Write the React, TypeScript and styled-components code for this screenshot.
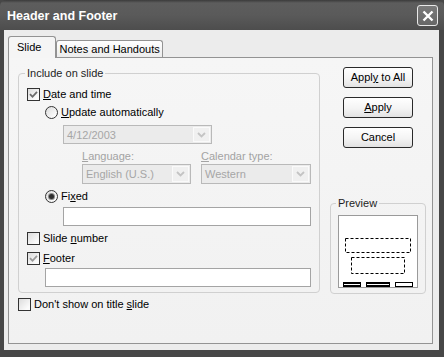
import styled, { createGlobalStyle } from "styled-components";

const GlobalStyle = createGlobalStyle`
  html, body {
    margin: 0;
    padding: 0;
    background: #ffffff;
  }
  body {
    font-family: "Liberation Sans", Arial, sans-serif;
    font-size: 11px;
    color: #000;
  }
`;

const Window = styled.div`
  width: 444px;
  height: 357px;
  display: flex;
  flex-direction: column;
  background: #474747;
`;

const TitleBar = styled.div`
  height: 30px;
  flex: none;
  box-sizing: border-box;
  display: flex;
  align-items: center;
  justify-content: space-between;
  padding: 1px 6px 0 7px;
  background: linear-gradient(#3b3b3b 0, #5d5d5d 3px, #5a5a5a 50%, #4d4d4d 100%);
  border-radius: 6px 6px 0 0;
`;

const Title = styled.span`
  color: #fff;
  font-weight: bold;
  font-size: 12.5px;
`;

const CloseButton = styled.div`
  width: 21px;
  height: 21px;
  box-sizing: border-box;
  border: 1px solid #e8e8e8;
  border-radius: 3px;
  background: linear-gradient(#7a7a7a, #676767);
  display: flex;
  align-items: center;
  justify-content: center;
`;

const Body = styled.div`
  flex: 1;
  margin: 0 5px 7px 4px;
  padding: 6px 6px 6px 4px;
  background: #ececec;
  display: flex;
  flex-direction: column;
`;

const TabStrip = styled.div`
  height: 21px;
  display: flex;
  align-items: flex-end;
`;

const Tab = styled.div<{ $active?: boolean }>`
  box-sizing: border-box;
  position: relative;
  line-height: 13px;
  border: 1px solid #939393;
  border-bottom: none;
  border-radius: 3px 3px 0 0;
  ${(p) =>
    p.$active
      ? `
    height: 22px;
    margin-bottom: -1px;
    padding: 4px 14px 0 8px;
    background: #f5f5f5;
    z-index: 1;
  `
      : `
    height: 17px;
    padding: 2px 2px 0 2px;
    background: linear-gradient(#ffffff, #ececec);
  `}
`;

const Panel = styled.div`
  flex: 1;
  border: 1px solid #939393;
  background: linear-gradient(#f6f6f6, #f1f1f1);
  display: flex;
  padding: 9px 6px 0 9px;
`;

const LeftColumn = styled.div`
  width: 302px;
  display: flex;
  flex-direction: column;
`;

const RightColumn = styled.div`
  width: 96px;
  margin-left: 10px;
  display: flex;
  flex-direction: column;
  align-items: center;
`;

const GroupBox = styled.fieldset<{ $pad: string }>`
  margin: 0;
  min-width: 0;
  box-sizing: border-box;
  width: 100%;
  border: 1px solid #d0d0d0;
  border-radius: 4px;
  padding: ${(p) => p.$pad};
`;

const Legend = styled.legend`
  padding: 0 2px;
  margin-left: -2px;
  line-height: 13px;
  color: #1e1e1e;
`;

const Stack = styled.div`
  display: flex;
  flex-direction: column;
`;

const OptionRow = styled.label<{ $indent?: number; $top?: number }>`
  display: flex;
  align-items: center;
  height: 13px;
  line-height: 13px;
  margin-left: ${(p) => p.$indent ?? 0}px;
  margin-top: ${(p) => p.$top ?? 0}px;
  gap: 3px;
  color: #000;
`;

const Box = styled.span`
  width: 13px;
  height: 13px;
  flex: none;
  box-sizing: border-box;
  border: 1px solid #333;
  background: linear-gradient(135deg, #dcdcdc, #fbfbfb 80%);
  display: flex;
  align-items: center;
  justify-content: center;
`;

const Radio = styled.span`
  width: 13px;
  height: 13px;
  flex: none;
  box-sizing: border-box;
  border: 1px solid #333;
  border-radius: 50%;
  background: linear-gradient(135deg, #dcdcdc, #fbfbfb 80%);
  display: flex;
  align-items: center;
  justify-content: center;
`;

const Dot = styled.span`
  width: 5px;
  height: 5px;
  border-radius: 50%;
  background: #2e2e2e;
  box-shadow: 0 0 0 1px #8a8a8a;
`;

const Key = styled.u`
  text-decoration-thickness: 1px;
  text-underline-offset: 1px;
`;

const Row = styled.div<{ $indent?: number; $top?: number; $gap?: number }>`
  display: flex;
  margin-left: ${(p) => p.$indent ?? 0}px;
  margin-top: ${(p) => p.$top ?? 0}px;
  gap: ${(p) => p.$gap ?? 0}px;
`;

const FieldLabel = styled.span<{ $width: number }>`
  width: ${(p) => p.$width}px;
  height: 13px;
  line-height: 13px;
  color: #a3a3a3;
`;

const Combo = styled.div<{ $width: number; $height: number }>`
  width: ${(p) => p.$width}px;
  height: ${(p) => p.$height}px;
  box-sizing: border-box;
  border: 1px solid #b9b9b9;
  background: #ebebeb;
  color: #a6a6a6;
  display: flex;
  align-items: center;
  padding: 1px 1px 1px 3px;
`;

const ComboButton = styled.span`
  margin-left: auto;
  width: 17px;
  height: 100%;
  box-sizing: border-box;
  border: 1px solid #fafafa;
  background: #f0f0f0;
  display: flex;
  align-items: center;
  justify-content: center;
`;

const TextField = styled.div<{ $width: number; $indent: number; $top: number }>`
  width: ${(p) => p.$width}px;
  height: 19px;
  box-sizing: border-box;
  margin-left: ${(p) => p.$indent}px;
  margin-top: ${(p) => p.$top}px;
  border: 1px solid #a4a4a4;
  background: #fff;
`;

const PushButton = styled.button<{ $top?: number }>`
  width: 70px;
  height: 21px;
  box-sizing: border-box;
  margin-top: ${(p) => p.$top ?? 0}px;
  padding: 0;
  border: 1px solid #2a2a2a;
  border-radius: 3px;
  background: linear-gradient(#ffffff, #f4f4f4 55%, #e2e2e2);
  font: inherit;
  color: #000;
  line-height: 13px;
`;

const PreviewWrap = styled.div`
  width: 96px;
  margin-top: 49px;
`;

const PreviewScreen = styled.div`
  width: 80px;
  height: 73px;
  box-sizing: border-box;
  border: 1px solid #9a9a9a;
  background: #fff;
  display: flex;
`;

const Check = ({ color }: { color: string }) => (
  <svg width="9" height="9" viewBox="0 0 9 9">
    <path d="M1 4.2 L3.5 6.8 L8 1.8" fill="none" stroke={color} strokeWidth="1.8" />
  </svg>
);

const Chevron = () => (
  <svg width="9" height="6" viewBox="0 0 9 6">
    <path d="M1 1 L4.5 4.5 L8 1" fill="none" stroke="#c4c4c4" strokeWidth="1.8" />
  </svg>
);

const SlideThumb = () => (
  <svg width="78" height="71" viewBox="0 0 78 71">
    <rect x="6.5" y="22.5" width="65" height="14" fill="none" stroke="#000" strokeDasharray="3 2" />
    <rect x="12.5" y="41.5" width="53" height="16" fill="none" stroke="#000" strokeDasharray="3 2" />
    <rect x="4" y="66" width="18" height="5" fill="#000" />
    <rect x="5" y="68" width="16" height="1" fill="#fff" />
    <rect x="27" y="66" width="24" height="5" fill="#000" />
    <rect x="28" y="68" width="22" height="1" fill="#fff" />
    <rect x="56" y="66" width="18" height="5" fill="#000" />
    <rect x="57" y="67" width="16" height="3" fill="#fff" />
  </svg>
);

export default function App() {
  return (
    <>
      <GlobalStyle />
      <Window>
        <TitleBar>
          <Title>Header and Footer</Title>
          <CloseButton>
            <svg width="12" height="12" viewBox="0 0 12 12">
              <path d="M1.5 1.5 L10.5 10.5 M10.5 1.5 L1.5 10.5" stroke="#fff" strokeWidth="2.4" />
            </svg>
          </CloseButton>
        </TitleBar>
        <Body>
          <TabStrip>
            <Tab $active>Slide</Tab>
            <Tab>Notes and Handouts</Tab>
          </TabStrip>
          <Panel>
            <LeftColumn>
              <GroupBox $pad="8px 8px 5px">
                <Legend>Include on slide</Legend>
                <Stack>
                  <OptionRow>
                    <Box>
                      <Check color="#6a6a6a" />
                    </Box>
                    <span>
                      <Key>D</Key>ate and time
                    </span>
                  </OptionRow>
                  <OptionRow $indent={18} $top={5}>
                    <Radio />
                    <span>
                      <Key>U</Key>pdate automatically
                    </span>
                  </OptionRow>
                  <Row $indent={36} $top={6}>
                    <Combo $width={149} $height={19}>
                      4/12/2003
                      <ComboButton>
                        <Chevron />
                      </ComboButton>
                    </Combo>
                  </Row>
                  <Row $indent={55} $top={6} $gap={10}>
                    <FieldLabel $width={109}>
                      <Key>L</Key>anguage:
                    </FieldLabel>
                    <FieldLabel $width={110}>
                      <Key>C</Key>alendar type:
                    </FieldLabel>
                  </Row>
                  <Row $indent={55} $top={1} $gap={10}>
                    <Combo $width={109} $height={20}>
                      English (U.S.)
                      <ComboButton>
                        <Chevron />
                      </ComboButton>
                    </Combo>
                    <Combo $width={110} $height={20}>
                      Western
                      <ComboButton>
                        <Chevron />
                      </ComboButton>
                    </Combo>
                  </Row>
                  <OptionRow $indent={18} $top={6}>
                    <Radio>
                      <Dot />
                    </Radio>
                    <span>
                      Fi<Key>x</Key>ed
                    </span>
                  </OptionRow>
                  <TextField $width={248} $indent={36} $top={4} />
                  <OptionRow $top={6}>
                    <Box />
                    <span>
                      Slide <Key>n</Key>umber
                    </span>
                  </OptionRow>
                  <OptionRow $top={7}>
                    <Box>
                      <Check color="#9a9a9a" />
                    </Box>
                    <span>
                      <Key>F</Key>ooter
                    </span>
                  </OptionRow>
                  <TextField $width={266} $indent={18} $top={3} />
                </Stack>
              </GroupBox>
              <OptionRow $top={5}>
                <Box />
                <span>
                  Don't show on title <Key>s</Key>lide
                </span>
              </OptionRow>
            </LeftColumn>
            <RightColumn>
              <PushButton>
                Appl<Key>y</Key> to All
              </PushButton>
              <PushButton $top={9}>
                <Key>A</Key>pply
              </PushButton>
              <PushButton $top={9}>Cancel</PushButton>
              <PreviewWrap>
                <GroupBox $pad="5px 7px 5px">
                  <Legend>Preview</Legend>
                  <PreviewScreen>
                    <SlideThumb />
                  </PreviewScreen>
                </GroupBox>
              </PreviewWrap>
            </RightColumn>
          </Panel>
        </Body>
      </Window>
    </>
  );
}
